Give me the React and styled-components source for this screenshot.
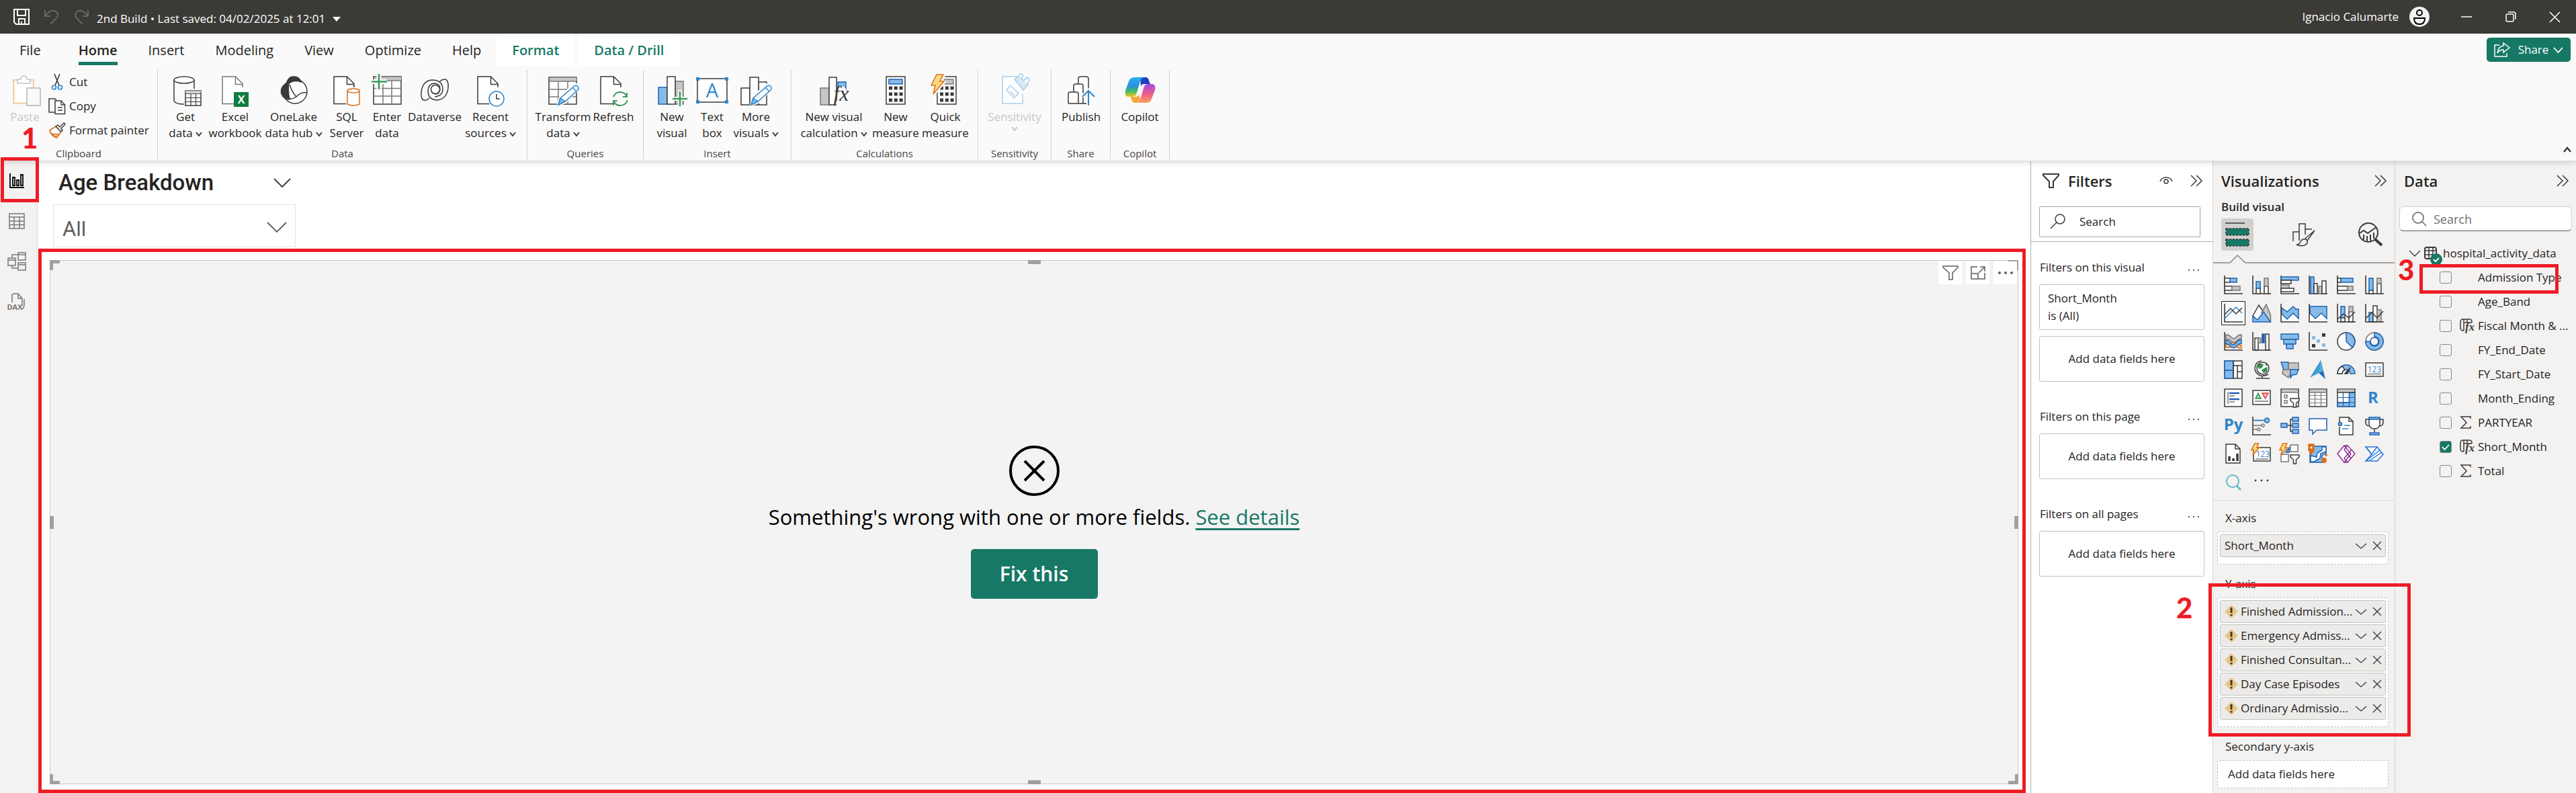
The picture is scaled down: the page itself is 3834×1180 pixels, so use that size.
import React from "react";
import styled, { createGlobalStyle, css } from "styled-components";

const K = "#3b3a39";
const BLUE = "#86bbe9";
const DEEP = "#1f62b0";
const SKY = "#2f86cb";
const GREY = "#797775";
const SILVER = "#c8c6c4";
const TEAL = "#177865";
const RED = "#ed1c24";
const ORANGE = "#d9701e";

const Global = createGlobalStyle`
  *, *::before, *::after { box-sizing: border-box; }
  body { margin: 0; background: #fff; color: #252423; font: 17px/24px "Open Sans", "Noto Sans", sans-serif; }
  button, input, select { font: inherit; color: inherit; }
  button { border: 0; background: none; padding: 0; cursor: pointer; }
  h2, h3, p, ul { margin: 0; padding: 0; font-size: inherit; font-weight: 400; }
  svg { display: block; flex: none; overflow: visible; }
`;

/* ---------- drawing helpers ---------- */
const Svg = ({ w = 28, h = w, vb, children, ...rest }) => (
  <svg width={w} height={h} viewBox={vb || `0 0 ${w} ${h}`} fill="none" stroke={K} strokeWidth="1.5" aria-hidden="true" {...rest}>
    {children}
  </svg>
);
const Box = ({ at, f = "#fff", s = K, ...rest }) => (
  <rect x={at[0]} y={at[1]} width={at[2]} height={at[3]} fill={f} stroke={s} {...rest} />
);
const Axis = () => <path d="M1 0V27H28" strokeWidth="1.6" />;
const Glyph = ({ x, y, size, fill = SKY, weight = 400, family = "Open Sans", ...rest }) => (
  <text x={x} y={y} fontSize={size} fontWeight={weight} fontFamily={`"${family}", sans-serif`} fill={fill} stroke="none" textAnchor="middle" {...rest}>{rest.children}</text>
);
const Bolt = ({ x = 0, y = 0, k = 1 }) => (
  <path transform={`translate(${x} ${y}) scale(${k})`} d="M8 0H18L13 10H19L3 29L6 16H0Z" fill="#fbd982" stroke={ORANGE} strokeWidth={1.5 / k} />
);
const DocPath = ({ s = K }) => (
  <g stroke={s}>
    <path d="M29 45H5V4H24L34 14V22" fill="#fff" stroke="none" />
    <path d="M26 44.500H5V4H24.500L35 14.500V20M24.500 4V15.500H35" />
  </g>
);
const ChevronDown = ({ w = 18, h = 9, c = K, sw = 1.3 }) => (
  <Svg w={w} h={h} stroke={c} strokeWidth={sw}><path d={`M1 1L${w / 2} ${h - 1}L${w - 1} 1`} /></Svg>
);
const DoubleChevron = () => <Svg w={18} h={18}><path d="M1 1L9 9L1 17M9 1L17 9L9 17" /></Svg>;
const Cross = ({ w = 12, c = K, sw = 1.4 }) => (
  <Svg w={w} h={w} stroke={c} strokeWidth={sw}><path d={`M0 0L${w} ${w}M${w} 0L0 ${w}`} /></Svg>
);
const Dots = ({ w = 18, c = K, r = 1.1 }) => (
  <Svg w={w} h={6} stroke="none" fill={c}><circle cx={2} cy={3} r={r} /><circle cx={w / 2} cy={3} r={r} /><circle cx={w - 2} cy={3} r={r} /></Svg>
);

/* ---------- ribbon icons, 48 x 48 ---------- */
const Pencil = () => (
  <g stroke={SKY}>
    <path d="M17 46L20 34L41 16Q47 15 47 22L27 42Z" fill="#fafafa" stroke="#fafafa" strokeWidth="4" />
    <path d="M20 36L41 18Q45 16 47 20Q48 22 46 24L27 41L17 46Z" fill="#fff" />
    <path d="M20 36L27 41L17 46Z" fill={BLUE} />
    <path d="M38 20L44 26" />
  </g>
);
const ribbonIcons = {
  paste: (
    <Svg w={48}>
      <rect x="7" y="9" width="30" height="35" fill="#fff" stroke="#f0d0b0" strokeWidth="2" />
      <rect x="9" y="11" width="26" height="31" stroke="#fdf3dc" strokeWidth="2" />
      <path d="M13 14V8H18Q18 3 22 3Q27 3 27 8H32V14Z" fill="#fff" stroke="#c4c4c4" />
      <rect x="27" y="21" width="20" height="26" fill="#fafafa" stroke="#b4b4b4" />
    </Svg>
  ),
  get: (
    <Svg w={48}>
      <path d="M7 9V40Q9 45 22 45M37 9V22" /><ellipse cx="22" cy="9" rx="15" ry="5" fill="#fff" />
      <Box at={[24, 25, 23, 22]} /><path d="M24 26.500H47" stroke={SILVER} strokeWidth="3" /><path d="M24 29.500H47M24 35.500H47M24 41.500H47M32 29V47M39.500 29V47" strokeWidth="1.200" />
    </Svg>
  ),
  excel: (
    <Svg w={48}>
      <DocPath s={GREY} />
      <rect x="22" y="27" width="22" height="22" fill="#107c41" stroke="none" />
      <Glyph x={33} y={44} size={16} weight={700} fill="#fff">X</Glyph>
    </Svg>
  ),
  onelake: (
    <Svg w={48}>
      <circle cx="26" cy="26" r="18" fill="#fff" />
      <path d="M14 13Q16 4 24 4Q33 4 35 12Q24 8 16 15Z" fill={K} />
      <path d="M17 12Q15 24 18 38Q10 38 6 30Q3 18 17 12Z" fill={K} />
      <path d="M18 16Q22 28 28 34M8 34Q20 40 28 34Q36 26 44 28" />
    </Svg>
  ),
  sql: (
    <Svg w={48}>
      <DocPath />
      <g stroke={ORANGE}><path d="M25 23V45Q34 50 43 45V23Z" fill="#fafafa" stroke="#fafafa" strokeWidth="4" /><path d="M25 25V45Q34 49 43 45V25" fill="#fff" /><ellipse cx="34" cy="25" rx="9" ry="3" fill="#fff" /></g>
    </Svg>
  ),
  enter: (
    <Svg w={48}>
      <Box at={[4, 4, 41, 41]} /><path d="M5 7H45" stroke={SILVER} strokeWidth="5" />
      <path d="M4 10H45M4 21.500H45M4 33H45M18 10V45M31 10V45" stroke={GREY} />
      <path d="M0 11.500H24M12 0V24" stroke="#fafafa" strokeWidth="7" /><path d="M1 11.500H24M12 0V23" stroke="#3a9a5b" strokeWidth="2.500" />
    </Svg>
  ),
  dataverse: (
    <Svg w={48}>
      <path d="M40 8Q45 10 44 21Q42 38 27 39Q14 38 14 25Q15 14 24 14Q32 15 32 23Q31 30 25 30Q19 29 19 23" />
      <path d="M8 39Q3 38 4 27Q6 10 20 9Q35 9 36 22Q36 33 24 34M16 36Q12 40 8 39M31 12Q34 8 40 8" />
      <circle cx="25" cy="23" r="6.500" fill="#fff" />
    </Svg>
  ),
  recent: (
    <Svg w={48}>
      <DocPath />
      <circle cx="33" cy="37" r="13" fill="#fafafa" stroke="none" /><circle cx="33" cy="37" r="11" fill="#fff" stroke={SKY} /><path d="M33 30V37H38" />
    </Svg>
  ),
  transform: (
    <Svg w={48}>
      <Box at={[3, 5, 41, 40]} /><path d="M4 8H44" stroke={SILVER} strokeWidth="5" /><path d="M3 11H44M3 23H44M3 34H44M17 11V45M31 11V45" stroke={GREY} />
      <Pencil />
    </Svg>
  ),
  refresh: (
    <Svg w={48}>
      <DocPath />
      <circle cx="34" cy="37" r="13" fill="#fafafa" stroke="none" />
      <path d="M24 34Q27 27 34 27Q41 27 44 34M44 28V34H38M45 39Q42 47 34 47Q27 47 24 40M24 47V40H30" stroke="#3a9a5b" strokeWidth="2" />
    </Svg>
  ),
  newvisual: (
    <Svg w={48}>
      <Box at={[4, 20, 13, 25]} f={BLUE} s={DEEP} /><Box at={[29, 11, 12, 34]} f={SILVER} s={GREY} /><Box at={[17, 4, 12, 41]} />
      <path d="M36 24V48M25 37H48" stroke="#fafafa" strokeWidth="6" /><path d="M36 26V48M25 37H47" stroke="#3a9a5b" strokeWidth="2.500" />
    </Svg>
  ),
  textbox: (
    <Svg w={48}>
      <Box at={[2, 7, 44, 35]} />
      <g fill={SKY} stroke="none"><rect x="0" y="5" width="5" height="5" /><rect x="43" y="5" width="5" height="5" /><rect x="0" y="39" width="5" height="5" /><rect x="43" y="39" width="5" height="5" /></g>
      <Glyph x={24} y={35} size={29}>A</Glyph>
    </Svg>
  ),
  more: (
    <Svg w={48}>
      <Box at={[2, 21, 13, 25]} /><Box at={[28, 12, 12, 34]} /><Box at={[15, 5, 13, 41]} /><Pencil />
    </Svg>
  ),
  calc: (
    <Svg w={48}>
      <Box at={[4, 21, 13, 25]} f={SILVER} s={GREY} /><Box at={[30, 12, 12, 12]} f={BLUE} s={DEEP} /><path d="M30 46V22Q33 14 42 22V46Z" fill="#fafafa" stroke="none" /><path d="M28 46H17V5H28V40" fill="#fff" />
      <Glyph x={35} y={40} size={32} family="Liberation Serif" fill={K} fontStyle="italic">fx</Glyph>
    </Svg>
  ),
  measure: (
    <Svg w={48}>
      <Box at={[10, 4, 28, 41]} /><Box at={[14, 8, 20, 7]} f={BLUE} s={DEEP} />
      <path d="M14 21H36M14 30H36M14 39H36" strokeWidth="5" strokeDasharray="5 2.800" />
    </Svg>
  ),
  quick: (
    <Svg w={48}>
      <Box at={[12, 4, 28, 41]} /><Box at={[18, 8, 18, 7]} f={SILVER} s={GREY} />
      <path d="M16 21H38M16 30H38M16 39H38" strokeWidth="5" strokeDasharray="5 2.800" />
      <path d="M10 0H24L19 12H24L8 31H4Z" fill="#fafafa" stroke="#fafafa" strokeWidth="2" /><Bolt x={3} y={1} k={1} />
    </Svg>
  ),
  sensitivity: (
    <Svg w={48} stroke="#a9cfe8">
      <path d="M36 30V44H6V4H30" fill="#fff" />
      <path d="M24 8L30 3L44 16L37 24Z" fill="#d5e8f5" /><path d="M30 2Q34 -2 37 2L33 8M38 10L42 5Q48 8 45 12L41 16" fill="#fafafa" />
      <path d="M12 24L18 17L30 29L23 36Z" fill="#fafafa" /><path d="M18 26L24 32" />
    </Svg>
  ),
  publish: (
    <Svg w={48}>
      <path d="M20 15V7Q20 4 23 4H31Q35 4 35 7V24M13 27V18Q13 15 16 15H24Q27 15 27 18V44M5 44V30Q5 27 8 27H17Q20 27 20 30V44M5 44H34" fill="#fff" />
      <path d="M35 47V25M26 34L35 25L44 34" stroke="#fafafa" strokeWidth="6" /><path d="M35 47V25M26 34L35 25L44 34" stroke={SKY} strokeWidth="2" />
    </Svg>
  ),
  copilot: (
    <Svg w={48} stroke="none">
      <defs>
        <linearGradient id="copA" x1="0" y1="0" x2="0" y2="1"><stop offset="0" stopColor="#2ab0ee" /><stop offset=".45" stopColor="#2a8fe0" /><stop offset=".7" stopColor="#3fb86b" /><stop offset="1" stopColor="#f3c91b" /></linearGradient>
        <linearGradient id="copB" x1="0" y1="0" x2="0" y2="1"><stop offset="0" stopColor="#a44ae8" /><stop offset=".5" stopColor="#ec5a8c" /><stop offset="1" stopColor="#fba05a" /></linearGradient>
        <linearGradient id="copC" x1="0" y1="0" x2="1" y2="1"><stop offset="0" stopColor="#1b4fc0" /><stop offset="1" stopColor="#2a2fbb" /></linearGradient>
      </defs>
      <path d="M24 5H32Q36 5 37 10L39 15H30Q26 15 25 19Z" fill="url(#copC)" />
      <path d="M16 5H28Q25 7 24 11L18 31Q16 34 12 34H7Q0 34 2 25L7 11Q9 5 16 5Z" fill="url(#copA)" />
      <path d="M36 15H41Q48 15 46 24L41 37Q39 43 33 43H20Q23 41 24 38L30 18Q32 15 36 15Z" fill="url(#copB)" />
      <path d="M10 34H17Q21 34 22 30L24 38Q22 43 18 43H16Q12 43 11 38Z" fill="#f2a93b" />
    </Svg>
  ),
  cut: (
    <Svg w={24}>
      <path d="M8 0L15 17M16 0L9 17" strokeWidth="1.600" /><circle cx="7.500" cy="20" r="3" stroke={SKY} strokeWidth="1.700" /><circle cx="16.500" cy="20" r="3" stroke={SKY} strokeWidth="1.700" />
    </Svg>
  ),
  copy: (
    <Svg w={24}>
      <path d="M9 21H0V1H9L11 3" /><path d="M9 4H18L23.500 10V23.500H9Z" fill="#fff" /><path d="M18 4V10H23.500M13 14H20M13 18H20" strokeWidth="1.300" />
    </Svg>
  ),
  painter: (
    <Svg w={24}>
      <path d="M1 12L10 6L18 14L11 23Q3 20 1 12Z" fill="#fff" stroke={ORANGE} strokeWidth="1.700" /><path d="M4 17L15 18L11 23Z" fill="#fbd08a" stroke={ORANGE} />
      <path d="M10 6L13 4L16 7L22 1Q25 2 23 4L18 9L20 12L18 14Z" fill="#fff" />
    </Svg>
  ),
};

/* ---------- visual gallery icons, 28 x 28 ---------- */
const Grid3 = () => <path d="M1 10.500H27M1 16H27M1 21.500H27M9.500 6V27M18.500 6V27" stroke={GREY} strokeWidth="1.200" />;
const FunnelBadge = () => <path d="M15 15H28V18L23.500 22V28H19.500V22L15 18Z" fill="#fff" />;
const gallery = [
  ["Stacked bar chart", <><Axis /><Box at={[1, 4, 8, 6]} /><Box at={[9, 4, 10, 6]} f={BLUE} s={DEEP} /><Box at={[1, 16, 11, 6]} /><Box at={[12, 16, 12, 6]} f={SILVER} s={GREY} /></>],
  ["Stacked column chart", <><Axis /><Box at={[6, 19, 6, 8]} /><Box at={[6, 9, 6, 10]} f={BLUE} s={DEEP} /><Box at={[18, 16, 6, 11]} /><Box at={[18, 4, 6, 12]} f={SILVER} s={GREY} /></>],
  ["Clustered bar chart", <><Axis /><Box at={[1, 2, 26, 5]} f={BLUE} s={DEEP} /><Box at={[1, 7, 15, 5]} /><Box at={[1, 14, 12, 5]} f={SILVER} s={GREY} /><Box at={[1, 19, 19, 5]} /></>],
  ["Clustered column chart", <><Axis /><Box at={[3, 2, 5, 25]} f={BLUE} s={DEEP} /><Box at={[8, 12, 5, 15]} /><Box at={[15, 16, 5, 11]} f={SILVER} s={GREY} /><Box at={[20, 8, 6, 19]} /></>],
  ["100% stacked bar chart", <><Axis /><Box at={[1, 4, 5, 6]} /><Box at={[6, 4, 18, 6]} f={BLUE} s={DEEP} /><Box at={[1, 16, 15, 6]} /><Box at={[16, 16, 8, 6]} f={SILVER} s={GREY} /></>],
  ["100% stacked column chart", <><Axis /><Box at={[6, 22, 6, 5]} /><Box at={[6, 4, 6, 18]} f={BLUE} s={DEEP} /><Box at={[18, 12, 6, 15]} /><Box at={[18, 4, 6, 8]} f={SILVER} s={GREY} /></>],
  ["Line chart", <><Axis /><path d="M1 22L18 5L27 14" stroke={SKY} /><path d="M1 16L10 7L18 15L27 6" /></>],
  ["Area chart", <><path d="M1 18L10 2L18 14L8 25Z" fill="#fff" /><path d="M14 13L21 1L27.500 17V27Z" fill={SILVER} stroke={GREY} /><path d="M1 27V19L8 24L17 12L27 27Z" fill={BLUE} stroke={DEEP} /></>],
  ["Stacked area chart", <><path d="M2 15L10 23L19 15L27 22V27H2Z" fill="#fff" stroke="none" /><path d="M2 6L10 12L19 4L23 8H27V22L19 14L10 23L2 15Z" fill={BLUE} stroke={DEEP} /><Axis /></>],
  ["100% stacked area chart", <><path d="M2 15L10 23L19 15L27 22V27H2Z" fill="#fff" stroke="none" /><path d="M2 4H27V22L19 14L10 22L2 14Z" fill={BLUE} stroke={DEEP} /><Axis /></>],
  ["Line and stacked column chart", <><Box at={[6, 4, 6, 17]} f={BLUE} s={DEEP} /><Box at={[6, 21, 6, 6]} /><Box at={[18, 12, 6, 15]} /><Box at={[18, 4, 6, 8]} f={SILVER} s={GREY} /><Axis /><path d="M1 23L10 15L18 21L27 12" /></>],
  ["Line and clustered column chart", <><Box at={[6, 13, 6, 14]} f={BLUE} s={DEEP} /><Box at={[12, 3, 6, 24]} /><Box at={[18, 9, 6, 18]} f={SILVER} s={GREY} /><Axis /><path d="M1 22L10 13L18 21L27 11" /></>],
  ["Ribbon chart", <><path d="M3 4Q8 4 11 8Q15 12 19 7Q22 4 26 4V10Q22 10 19 14Q15 17 11 14Q8 10 3 11Z" fill={SILVER} stroke={GREY} /><path d="M3 17Q14 14 26 20V24H22Q14 18 8 23H3Z" fill="#f8c38c" stroke={ORANGE} /><path d="M3 12Q7 12 10 17Q14 22 18 16Q22 11 26 12V17Q22 17 19 21Q14 26 9 21Q7 17 3 18Z" fill={BLUE} stroke={DEEP} /><Axis /></>],
  ["Waterfall chart", <><Box at={[4, 9, 5, 18]} /><Box at={[9, 9, 4, 7]} f={SILVER} s={GREY} /><Box at={[15, 3, 3, 13]} f={DEEP} s={DEEP} /><Box at={[20, 3, 5, 24]} /><Axis /></>],
  ["Funnel", <><Box at={[1, 3, 26, 8]} f={BLUE} s={DEEP} /><Box at={[5, 11, 18, 7]} f={BLUE} s={DEEP} /><Box at={[9, 18, 10, 7]} f={BLUE} s={DEEP} /></>],
  ["Scatter chart", <><Axis /><g stroke="none"><rect x="5" y="6" width="5" height="5" fill={BLUE} /><rect x="12" y="11" width="5" height="5" fill={BLUE} /><rect x="20" y="17" width="5" height="5" fill={BLUE} /><rect x="20" y="2" width="5" height="5" fill={K} /><rect x="5" y="18" width="5" height="5" fill={K} /></g></>],
  ["Pie chart", <><circle cx="14" cy="14" r="13" fill="#fff" /><path d="M14 1A13 13 0 0 1 23 23L14 14Z" fill={BLUE} stroke={DEEP} /></>],
  ["Donut chart", <><circle cx="14" cy="14" r="13" fill="#fff" stroke={GREY} /><path d="M14 1A13 13 0 1 1 1 14H7A7 7 0 1 0 14 7Z" fill={BLUE} stroke={DEEP} /><circle cx="14" cy="14" r="6" fill="#f3f2f1" stroke={DEEP} /></>],
  ["Treemap", <><Box at={[1, 1, 26, 26]} /><Box at={[1, 1, 13, 14]} f={BLUE} s={DEEP} /><Box at={[1, 15, 13, 12]} f={BLUE} s={DEEP} /><path d="M14 8H27M20 8V27M20 17H27M14 1V27" /></>],
  ["Map", <><circle cx="16" cy="12" r="9" fill="#fff" /><path d="M11 5L17 6L15 11L10 13L8 9ZM18 12L23 10L22 17L17 19L14 15ZM20 4L24 8L20 8Z" fill="#2f8f4e" stroke="none" /><path d="M14 1Q5 2 4 12Q4 19 12 23Q19 24 24 21M15 23V26M6 27H26" /></>],
  ["Filled map", <><path d="M1 3H12V15L5 14Z" fill={BLUE} stroke={DEEP} /><path d="M12 4H27V14L12 15Z" fill={SILVER} stroke={GREY} /><path d="M4 14L15 14V20L12 26L3 20Z" fill={SILVER} stroke={GREY} /><path d="M15 14H27L24 21L18 22L15 26Z" fill={BLUE} stroke={DEEP} /></>],
  ["Azure map", <g stroke="none"><path d="M18 0L2 26L15 19Z" fill="#3d9dd0" /><path d="M18 0L15 19L25 28Z" fill="#2a6fb8" /><path d="M18 0L15 19L22 16Z" fill="#52b0dd" /></g>],
  ["Gauge", <><path d="M1 20A13 13 0 0 1 27 20H20A6 6 0 0 0 8 20Z" fill={BLUE} stroke={DEEP} /><path d="M1 20A13 13 0 0 1 8 9L12 14Q8 16 8 20Z" fill="#fff" /><path d="M20 11L16 20H12Z" fill={K} /></>],
  ["Card", <><Box at={[1, 4, 26, 20]} /><Glyph x={14} y={18} size={12}>123</Glyph><path d="M4 20.500H24" stroke={GREY} /></>],
  ["Multi-row card", <><Box at={[1, 1, 26, 26]} /><path d="M6 5V23" stroke={GREY} /><path d="M8 7H23M8 16H23" stroke={DEEP} strokeWidth="2.500" /><path d="M8 11H16M8 20H16" stroke={GREY} /></>],
  ["KPI", <><Box at={[1, 3, 26, 21]} /><path d="M5 15L9 7L13 15Z" fill="#9fd8ae" stroke="#2f8f4e" /><path d="M15 7H24L19.500 15Z" fill="#fbb" stroke="#d93a3a" /><path d="M4 19H24" stroke={GREY} /></>],
  ["Slicer", <><Box at={[1, 1, 26, 26]} /><path d="M2 3.500H26" stroke={SILVER} strokeWidth="4" /><path d="M1 6H27" stroke={GREY} /><Box at={[6, 10, 4, 4]} s={GREY} /><Box at={[6, 18, 4, 4]} s={GREY} /><FunnelBadge /></>],
  ["Table", <><Box at={[1, 1, 26, 26]} /><path d="M2 3.500H26" stroke={SILVER} strokeWidth="4" /><path d="M1 6H27" stroke={GREY} /><Grid3 /></>],
  ["Matrix", <><Box at={[1, 1, 26, 26]} /><path d="M2 3.500H26" stroke={SILVER} strokeWidth="4" /><path d="M18.500 6H27V27H1V21H18.500Z" fill={BLUE} stroke={DEEP} /><path d="M1 6H27" /><path d="M1 13.500H27M1 21H27M9.500 6V27M18.500 6V27" stroke={DEEP} strokeWidth="1.200" /></>],
  ["R script visual", <Glyph x={12} y={22} size={24} weight={700}>R</Glyph>],
  ["Python visual", <Glyph x={14} y={20} size={24} weight={700}>Py</Glyph>],
  ["Key influencers", <><Axis /><path d="M2 5.500H18" stroke={SKY} strokeWidth="2" /><circle cx="22" cy="5.500" r="3.500" fill={BLUE} stroke={DEEP} /><path d="M2 13H14M2 19H8" stroke={GREY} /><circle cx="16" cy="13" r="2" fill="#fff" stroke={GREY} /><circle cx="10" cy="19" r="2" fill="#fff" stroke={GREY} /></>],
  ["Decomposition tree", <><path d="M10 13H17M18 4H15V22H18" /><Box at={[1, 10, 9, 6]} f={BLUE} s={DEEP} /><Box at={[18, 1, 9, 6]} f={BLUE} s={DEEP} /><Box at={[18, 10, 9, 6]} f={BLUE} s={DEEP} /><Box at={[18, 19, 9, 6]} f={BLUE} s={DEEP} /></>],
  ["Q&A", <path d="M1 3H27V20H12L6 26V20H1Z" fill="#fff" stroke={DEEP} />],
  ["Smart narrative", <><path d="M4 8V1H18L24 7V27H4V15" fill="#fff" /><path d="M18 1V7H24" /><circle cx="5" cy="11" r="2.500" fill={BLUE} stroke={DEEP} /><path d="M11 13H20M8 18H17" stroke={SKY} /></>],
  ["Goals", <><path d="M6 4H1V8Q1 14 7 14M22 4H27V8Q27 14 21 14" /><path d="M6 2H22V11Q21 18 14 18Q7 18 6 11ZM14 18V23" fill="#fff" /><Box at={[6, 1, 16, 3]} f={BLUE} s={DEEP} /><Box at={[7, 24, 14, 3]} f={BLUE} s={DEEP} /></>],
  ["Paginated report", <><path d="M3 -1H17L24 6V27H3Z" fill="#fff" /><path d="M17 -1V6H24" /><path d="M8 17V24M14 20V24M20 13V24" strokeWidth="3.500" /></>],
  ["Card (new)", <><Box at={[2, 4, 25, 20]} /><Glyph x={16} y={18} size={12}>123</Glyph><path d="M5 21H24" stroke={GREY} /><Bolt x={-1} y={-2} k={0.6} /></>],
  ["Slicer (new)", <><Box at={[15, 0, 11, 10]} s={GREY} /><Box at={[1, 14, 11, 11]} s={GREY} /><path d="M8 11L13 4V11Z" fill={BLUE} stroke={DEEP} /><FunnelBadge /><Bolt x={-1} y={-2} k={0.6} /></>],
  ["ArcGIS map", <><path d="M2 2H26V12L20 16L21 26H2Z" fill={BLUE} stroke={DEEP} /><path d="M3 16L12 18L13 12L20 8V3H26V10L18 13L17 20L8 25H3Z" fill="#fff" stroke={DEEP} /><path d="M0 -1H8V8L4 14L0 8Z" fill={ORANGE} stroke={ORANGE} /><circle cx="4" cy="4" r="1.500" fill="#fff" stroke="none" /><circle cx="23" cy="23" r="4" fill={ORANGE} stroke="none" /><circle cx="26" cy="15" r="2" fill={ORANGE} stroke="none" /></>],
  ["Power Apps", <g stroke="#8e2a91"><path d="M11 1L1 13L11 26H16L27 13L16 1Z" fill="#fff" /><path d="M11 1L21 13.500L11 26M16 1L11 7L21 20M22 7L11 20L16 26" /></g>],
  ["Power Automate", <g stroke="#2672d6"><path d="M1 3H18L27 14L18 24H1L10 14Z" fill="#fff" /><path d="M10 14L18 3M1 24L22 8M6 24L25 11M1 3L10 14" /></g>],
  ["Find visual", <><circle cx="13" cy="12" r="9" stroke="#66b8cc" strokeWidth="2" /><path d="M19 19L25 25" stroke="#66b8cc" strokeWidth="3" /></>],
  ["More visuals", <g fill={K} stroke="none"><circle cx="5" cy="11" r="1.400" /><circle cx="14" cy="11" r="1.400" /><circle cx="23" cy="11" r="1.400" /></g>],
];

/* ---------- layout ---------- */
const Page = styled.div`display: flex; flex-direction: column; min-height: 100vh; overflow: hidden;`;
const Row = styled.div`display: flex; align-items: center; gap: ${(p) => p.$gap || 0}px;`;
const Spacer = styled.div`flex: 1;`;

const TitleBar = styled.header`
  display: flex; align-items: center; height: 50px; padding: 0 24px 0 20px;
  background: #3b3a37; color: #fff;
`;
const BarTools = styled(Row)`gap: 22px; margin-right: 12px;`;
const FileName = styled.button`display: flex; align-items: center; gap: 11px; padding-top: 6px;`;
const Avatar = styled.span`
  display: grid; place-items: center; width: 30px; height: 30px; margin: 0 47px 0 16px;
  border-radius: 50%; background: #f3f2f1;
`;
const WindowButtons = styled(Row)`gap: 50px;`;

const Ribbon = styled.section`
  position: relative; z-index: 1; background: #fafafa; border-bottom: 1px solid #dedede; box-shadow: 0 2px 8px rgba(0,0,0,.14);
`;
const TabRow = styled.nav`display: flex; height: 48px; padding-left: 6px;`;
const Tab = styled.button`
  display: flex; flex-direction: column; align-items: center; justify-content: flex-end;
  padding: 0 23px 1px; font-size: 20px; color: #252423;
  ${(p) => p.$first && css`margin-right: 10px;`}
  ${(p) => p.$context && css`background: #fff; color: ${TEAL}; font-weight: 600; margin-right: 6px;`}
  ${(p) => p.$active && css`font-weight: 600;`}
  &::after { content: ""; width: 100%; height: 5px; margin-top: 5px; background: ${(p) => (p.$active ? TEAL : "transparent")}; }
`;
const ShareButton = styled.button`
  display: flex; align-items: center; justify-content: center; gap: 7px; width: 125px; height: 36px; margin: 6px 8px 0 0;
  border-radius: 5px; background: ${TEAL}; color: #fff;
  svg:first-child { margin-right: 5px; }
`;
const Groups = styled.div`display: flex; padding: 6px 0 2px;`;
const Group = styled.section`
  display: flex; flex-direction: column; justify-content: space-between; width: ${(p) => p.$w}px; height: 133px;
  border-right: 1px solid #d0d0d0;
`;
const GroupBody = styled.div`display: flex; padding-left: 10px;`;
const GroupName = styled.h3`font-size: 15px; line-height: 18px; text-align: center; color: #484644;`;
const BigButton = styled.button`
  display: flex; flex-direction: column; align-items: center; width: ${(p) => p.$w}px; padding-top: 6px; white-space: nowrap;
  line-height: 24px; color: ${(p) => (p.$off ? "#c8c6c4" : "#252423")};
  svg { margin-bottom: 4px; }
`;
const SecondLine = styled.span`display: flex; align-items: center; gap: 4px; svg { margin: 2px 0 0; }`;
const SmallButtons = styled.div`display: flex; flex-direction: column; margin-left: 9px;`;
const SmallButton = styled.button`display: flex; align-items: center; gap: 6px; height: 36px; white-space: nowrap;`;
const Collapse = styled.button`align-self: flex-end; margin: 0 7px 10px 0;`;

const Body = styled.main`display: flex; flex: 1; align-items: stretch;`;
const Rail = styled.nav`
  display: flex; flex-direction: column; width: 56px; background: #f3f2f1; border-right: 1px solid #dcdad8;
`;
const RailButton = styled.button`display: grid; place-items: center; height: 60px; padding: 0 6px 2px 0;`;

/* red call-out frames drawn over the parts they point at */
const Callout = styled.span`
  position: absolute; z-index: 3; border: 5px solid ${RED}; pointer-events: none;
  inset: ${(p) => p.$inset}; width: ${(p) => (p.$w ? `${p.$w}px` : "auto")};
`;
const CalloutNumber = styled.span`
  position: absolute; z-index: 3; color: ${RED}; font: 900 42px/42px Lato, sans-serif; pointer-events: none;
  left: ${(p) => p.$left}px; top: ${(p) => p.$top}px;
`;

const Canvas = styled.section`display: flex; flex: 1; flex-direction: column; min-width: 0; background: #fff;`;
const Slicer = styled.div`width: 361px; margin: 12px 0 0 23px; font-family: Roboto, sans-serif;`;
const SlicerHead = styled.div`
  display: flex; justify-content: space-between; align-items: center; height: 52px; padding: 0 7px 12px 8px;
  font-size: 33px; font-weight: 500;
`;
const SelectWrap = styled.div`display: grid; align-items: center; border: 1px solid #e1e1e1; height: 64px;
  > * { grid-area: 1 / 1; } > svg { justify-self: end; margin: 4px 12px 0 0; pointer-events: none; }
`;
const Select = styled.select`
  appearance: none; width: 100%; height: 62px; border: 0; background: #fff; padding: 10px 0 0 13px; font-size: 31px; color: #605e5c;
`;
const VisualFrame = styled.div`position: relative; display: flex; flex: 1; margin: 2px 7px 0 1px; padding: 17px 11px 13px 17px;`;
const Visual = styled.article`
  position: relative; display: flex; flex: 1; flex-direction: column; align-items: center; justify-content: center;
  border: 1px solid #c8c8c8; background: #f3f3f3; color: #000;
`;
const VisualTools = styled.div`position: absolute; top: 1px; right: 1px; display: flex; gap: 6px;`;
const VisualTool = styled.button`display: grid; place-items: center; width: 35px; height: 34px; background: #fff;`;
const Handle = styled.span`
  position: absolute; ${(p) => p.$at}
  ${(p) => (p.$corner ? css`width: 15px; height: 15px; border: 0 solid #a0a0a0; border-width: ${p.$corner};` : css`background: #a0a0a0;`)}
`;
const ErrorText = styled.p`margin: 11px 0 28px; font-size: 31px; line-height: 40px; a { color: ${TEAL}; text-underline-offset: 5px; }`;
const FixButton = styled.button`
  width: 189px; height: 74px; border-radius: 5px; background: ${TEAL}; color: #fff; font-size: 30px; font-weight: 600;
`;

const Pane = styled.aside`
  display: flex; flex-direction: column; width: ${(p) => p.$w}px; border-left: 1px solid ${(p) => (p.$plain ? "#b0b0b0" : "#d8d6d4")};
  background: ${(p) => (p.$plain ? "#fff" : "#f3f2f1")};
`;
const PaneHead = styled.div`display: flex; align-items: center; height: 56px; padding: 2px ${(p) => p.$right}px 0 ${(p) => p.$left}px;`;
const PaneTitle = styled.h2`font-size: 22px; font-weight: 600; line-height: 30px;`;
const FilterTop = styled.div`padding: 11px 18px 6px 12px; border-bottom: 1px solid #b0b0b0;`;
const SearchBox = styled.label`
  display: flex; align-items: center; gap: ${(p) => p.$gap}px; height: ${(p) => p.$h}px; padding: 0 ${(p) => p.$pad}px; background: #fff;
  border: 1px solid ${(p) => (p.$soft ? "#d2d0ce" : "#a8a6a4")}; border-radius: ${(p) => (p.$soft ? 6 : 2)}px;
  ${(p) => p.$soft && css`margin: 11px 6px 0; border-bottom-color: #605e5c;`}
  input { flex: 1; min-width: 0; border: 0; outline: 0; padding: 0; background: none; font-size: ${(p) => (p.$soft ? 18 : 17)}px; }
  input::placeholder { color: ${(p) => (p.$soft ? "#707070" : "#252423")}; opacity: 1; }
`;
const FilterGroup = styled.section`display: flex; flex-direction: column; gap: 9px; padding: 22px 12px 31px; & + & { padding-top: 5px; }`;
const FilterName = styled.div`
  display: flex; justify-content: space-between; align-items: center; height: 32px; padding: 0 7px 0 1px;
  svg { margin-top: 8px; }
`;
const Card = styled.div`
  height: 68px; border: 1px solid #c4c2c0; border-radius: 3px; background: #fff;
  ${(p) => p.$empty ? css`display: grid; place-items: center;` : css`padding: 7px 12px; line-height: 26px;`}
`;

const BuildTitle = styled.h3`padding: 0 12px; font-weight: 600; height: 29px; line-height: 24px;`;
const BuildTabs = styled.div`display: flex; justify-content: space-between; padding: 0 12px 7px;`;
const BuildTab = styled.button`
  display: grid; place-items: center; width: 48px; height: 48px; border-radius: 4px; background: ${(p) => (p.$on ? "#d2d0ce" : "none")};
`;
const Gallery = styled.div`
  display: grid; grid-template-columns: repeat(6, 36px); gap: 6px; padding: 14px 12px 8px; border-bottom: 1px solid #dcdad8;
`;
const GalleryButton = styled.button`
  display: grid; place-items: center; height: 36px; border: 1px solid ${(p) => (p.$on ? "#252423" : "transparent")};
  background: ${(p) => (p.$on ? "#fafafa" : "none")};
`;
const WellName = styled.h3`height: 46px; line-height: 24px; padding: 14px 0 0 18px;`;
const Well = styled.div`
  position: relative; display: flex; flex-direction: column; gap: 2px; margin: 0 9px 3px 6px; padding: 3px 3px 10px;
  border: 1px dashed #c4c2c0; border-radius: 3px; background: #fff;
`;
const EmptyWell = styled(Well)`height: 42px; padding: 8px 15px; line-height: 24px;`;
const Chip = styled.div`
  display: flex; align-items: center; gap: 4px; height: 34px; padding: 0 6px;
  border: 1px solid #c4c2c0; border-radius: 3px; background: #edebe9;
  > span { flex: 1; white-space: nowrap; min-width: 0; }
  button + button { margin-left: 5px; }
`;

const Tree = styled.ul`display: flex; flex-direction: column; list-style: none; padding-top: 15px;`;
const TreeRow = styled.li`
  position: relative; display: flex; align-items: center; height: 36px; white-space: nowrap;
  padding-left: ${(p) => (p.$root ? 20 : 66)}px;
`;
const RootButton = styled.button`display: flex; align-items: center; gap: 4px; svg:first-child { margin-right: 1px; }`;
const CheckLabel = styled.label`display: flex; align-items: center;`;
const CheckCell = styled.span`
  display: grid; place-items: center; > * { grid-area: 1 / 1; } svg { visibility: hidden; pointer-events: none; }
  input:checked + svg { visibility: visible; }
`;
const CheckInput = styled.input`
  appearance: none; width: 18px; height: 18px; margin: 0; border: 1px solid #8a8886; border-radius: 3px;
  &:checked { background: ${TEAL}; }
`;
const FieldIcon = styled.span`width: 39px; padding-left: 12px;`;

/* ---------- parts ---------- */
const Big = ({ icon, w, l1, l2, caret, off }) => (
  <BigButton $w={w} $off={off} disabled={off} type="button">
    {ribbonIcons[icon]}
    <span>{l1}</span>
    {(l2 || caret) && <SecondLine>{l2}{caret && <ChevronDown w={10} h={7} sw={2} c={off ? "#c8c6c4" : K} />}</SecondLine>}
  </BigButton>
);

const groups = [
  { name: "Data", w: 550, items: [
    { icon: "get", w: 62, l1: "Get", l2: "data", caret: true },
    { icon: "excel", w: 86, l1: "Excel", l2: "workbook" },
    { icon: "onelake", w: 88, l1: "OneLake", l2: "data hub", caret: true },
    { icon: "sql", w: 70, l1: "SQL", l2: "Server" },
    { icon: "enter", w: 50, l1: "Enter", l2: "data" },
    { icon: "dataverse", w: 92, l1: "Dataverse" },
    { icon: "recent", w: 74, l1: "Recent", l2: "sources", caret: true },
  ] },
  { name: "Queries", w: 173, items: [
    { icon: "transform", w: 86, l1: "Transform", l2: "data", caret: true },
    { icon: "refresh", w: 64, l1: "Refresh" },
  ] },
  { name: "Insert", w: 220, items: [
    { icon: "newvisual", w: 64, l1: "New", l2: "visual" },
    { icon: "textbox", w: 56, l1: "Text", l2: "box" },
    { icon: "more", w: 74, l1: "More", l2: "visuals", caret: true },
  ] },
  { name: "Calculations", w: 278, items: [
    { icon: "calc", w: 106, l1: "New visual", l2: "calculation", caret: true },
    { icon: "measure", w: 78, l1: "New", l2: "measure" },
    { icon: "quick", w: 70, l1: "Quick", l2: "measure" },
  ] },
  { name: "Sensitivity", w: 109, items: [{ icon: "sensitivity", w: 88, l1: "Sensitivity", caret: true, off: true }] },
  { name: "Share", w: 88, items: [{ icon: "publish", w: 68, l1: "Publish" }] },
  { name: "Copilot", w: 88, items: [{ icon: "copilot", w: 67, l1: "Copilot" }] },
];

const tabs = ["File", "Home", "Insert", "Modeling", "View", "Optimize", "Help", "Format", "Data / Drill"];

const FxIcon = () => (
  <Svg w={22}>
    <path d="M6 18Q1 18 1 14V5Q1 1 5 1H14Q18 1 18 5V6M6 1V18M6 6H18M11 1V6" />
    <Glyph x={15} y={18} size={17} family="Liberation Serif" weight={700} fill={K} fontStyle="italic">fx</Glyph>
  </Svg>
);
const SigmaIcon = () => <Svg w={18} h={20}><path d="M16 4V1H2L10 10L2 18H16V15" /></Svg>;
const fieldIcons = { fx: <FxIcon />, sum: <SigmaIcon /> };
const fields = [
  { name: "Admission Type", marked: true }, { name: "Age_Band" }, { name: "Fiscal Month & ...", icon: "fx" }, { name: "FY_End_Date" },
  { name: "FY_Start_Date" }, { name: "Month_Ending" }, { name: "PARTYEAR", icon: "sum" },
  { name: "Short_Month", icon: "fx", on: true }, { name: "Total", icon: "sum" },
];
const yFields = ["Finished Admission...", "Emergency Admiss...", "Finished Consultan...", "Day Case Episodes", "Ordinary Admissio..."];

const FieldChip = ({ name, warn }) => (
  <Chip>
    {warn && <Svg w={20}><path d="M10 0L20 10L10 20L0 10Z" fill="#eac782" stroke="none" /><path d="M10 4V12M10 14V16.500" strokeWidth="3" /></Svg>}
    <span>{name}</span>
    <button type="button" aria-label={`Options for ${name}`}><ChevronDown /></button>
    <button type="button" aria-label={`Remove ${name}`}><Cross /></button>
  </Chip>
);
const FilterSection = ({ title, children }) => (
  <FilterGroup>
    <FilterName>{title}<button type="button" aria-label="More options"><Dots /></button></FilterName>
    {children}
    <Card $empty>Add data fields here</Card>
  </FilterGroup>
);

export default function App() {
  return (
    <Page>
      <Global />
      <TitleBar>
        <BarTools>
          <Svg w={24} stroke="#fff" strokeWidth="2"><path d="M1 1H23V23H4L1 20ZM6 1V10H18V1M8 23V15H17V23M12 19V23" /></Svg>
          <Svg w={22} stroke="#75736f"><path d="M1 1V10H9M1 10Q8 0 15 2Q22 5 19 12L9 22" /></Svg>
          <Svg w={22} stroke="#75736f"><path d="M21 1V10H13M21 10Q14 0 7 2Q0 5 3 12L13 22" /></Svg>
        </BarTools>
        <FileName type="button">2nd Build • Last saved: 04/02/2025 at 12:01<Svg w={12} h={7} fill="#fff" stroke="none"><path d="M0 0H12L6 7Z" /></Svg></FileName>
        <Spacer />
        <span>Ignacio Calumarte</span>
        <Avatar><Svg w={20} h={24} stroke="#000" strokeWidth="2"><circle cx="10" cy="6" r="4" /><path d="M2 14H18Q18 23 10 23Q2 23 2 14Z" /></Svg></Avatar>
        <WindowButtons>
          <button type="button" aria-label="Minimise"><Svg w={16} stroke="#fff"><path d="M0 8H16" /></Svg></button>
          <button type="button" aria-label="Restore"><Svg w={16} stroke="#fff"><rect x="1" y="4" width="11" height="11" rx="2" /><path d="M4 1H12Q15 1 15 4V12" /></Svg></button>
          <button type="button" aria-label="Close"><Cross w={15} c="#fff" sw={1.5} /></button>
        </WindowButtons>
      </TitleBar>

      <Ribbon>
        <TabRow>
          {tabs.map((t, i) => <Tab key={t} type="button" $first={i === 0} $active={i === 1} $context={i > 6}>{t}</Tab>)}
          <Spacer />
          <ShareButton type="button">
            <Svg w={24} h={22} stroke="#fff"><path d="M8 4H1V21H19V16" /><path d="M14 1L23 8L14 15V11Q8 11 5 16Q6 6 14 5Z" /></Svg>
            Share<ChevronDown w={15} h={9} c="#fff" sw={1.8} />
          </ShareButton>
        </TabRow>
        <Groups>
          <Group $w={235}>
            <GroupBody>
              <Big icon="paste" w={54} l1="Paste" off />
              <SmallButtons>
                <SmallButton type="button">{ribbonIcons.cut}Cut</SmallButton>
                <SmallButton type="button">{ribbonIcons.copy}Copy</SmallButton>
                <SmallButton type="button">{ribbonIcons.painter}Format painter</SmallButton>
              </SmallButtons>
            </GroupBody>
            <GroupName>Clipboard</GroupName>
          </Group>
          {groups.map((g) => (
            <Group key={g.name} $w={g.w}>
              <GroupBody>{g.items.map((it) => <Big key={it.icon} {...it} />)}</GroupBody>
              <GroupName>{g.name}</GroupName>
            </Group>
          ))}
          <Spacer />
          <Collapse type="button" aria-label="Collapse ribbon"><Svg w={12} h={8} strokeWidth="2.500"><path d="M1 7L6 1L11 7" /></Svg></Collapse>
        </Groups>
        <CalloutNumber $left={32} $top={134}>1</CalloutNumber>
        <Callout $inset="184px auto -62px 1px" $w={57} />
      </Ribbon>

      <Body>
        <Rail>
          <RailButton type="button" aria-label="Report view"><Svg w={22} stroke="#000" strokeWidth="1.800"><path d="M1 0V21H22M5 18V6H8V18ZM11 18V10H14V18ZM17 18V2H20V18Z" /></Svg></RailButton>
          <RailButton type="button" aria-label="Table view"><Svg w={24} stroke={GREY}><Box at={[1, 1, 22, 22]} f="none" s={GREY} /><path d="M1 6H23M1 12H23M1 17.500H23M8 6V23M16 6V23" /></Svg></RailButton>
          <RailButton type="button" aria-label="Model view"><Svg w={28} stroke={GREY}><path d="M16 1H27V12H16ZM16 16H27V27H16ZM1 9H12V20H1ZM16 4H27M16 19H27M1 12H12M7 9V4H16M7 20V24H16" /></Svg></RailButton>
          <RailButton type="button" aria-label="DAX query view"><Svg w={26} stroke={GREY}><path d="M6 14V4Q6 1 9 1H15L21 8V19M15 1V8H21M24 9V17Q24 22 21 24" /><Glyph x={10} y={25} size={11} weight={700} fill={GREY}>DAX</Glyph></Svg></RailButton>
        </Rail>

        <Canvas>
          <Slicer>
            <SlicerHead><label htmlFor="age">Age Breakdown</label><ChevronDown w={26} h={14} sw={1.8} /></SlicerHead>
            <SelectWrap>
              <Select id="age" defaultValue="All"><option>All</option></Select>
              <ChevronDown w={30} h={16} c="#605e5c" sw={1.8} />
            </SelectWrap>
          </Slicer>
          <VisualFrame>
            <Callout $inset="0" />
            <Visual>
              <Handle $at="left:-1px;top:-1px;" $corner="5px 0 0 5px" />
              <Handle $at="right:-1px;top:-1px;" $corner="5px 5px 0 0" />
              <Handle $at="left:-1px;bottom:-1px;" $corner="0 0 5px 5px" />
              <Handle $at="right:-1px;bottom:-1px;" $corner="0 5px 5px 0" />
              <Handle $at="left:calc(50% - 9px);top:-1px;width:19px;height:6px;" />
              <Handle $at="left:calc(50% - 9px);bottom:-1px;width:19px;height:6px;" />
              <Handle $at="top:calc(50% - 9px);left:-1px;width:6px;height:19px;" />
              <Handle $at="top:calc(50% - 9px);right:-1px;width:6px;height:19px;" />
              <VisualTools>
                <VisualTool type="button" aria-label="Filters"><Svg w={24} h={22} stroke="#605e5c"><path d="M1 1H23V3L15 11V21H10V11L1 3Z" /></Svg></VisualTool>
                <VisualTool type="button" aria-label="Focus mode"><Svg w={22} h={20} stroke="#605e5c"><path d="M10 1H1V19H21V10M1 11H11V19M14 1H21V8M21 1L12 10" /></Svg></VisualTool>
                <VisualTool type="button" aria-label="More options"><Dots w={22} c="#605e5c" r={2} /></VisualTool>
              </VisualTools>
              <Svg w={75} stroke="#000" strokeWidth="4"><circle cx="37.500" cy="37.500" r="35.500" /><path d="M23 23L52 52M52 23L23 52" /></Svg>
              <ErrorText>Something's wrong with one or more fields. <a href="#details">See details</a></ErrorText>
              <FixButton type="button">Fix this</FixButton>
            </Visual>
          </VisualFrame>
        </Canvas>

        <Pane $w={271} $plain>
          <PaneHead $left={17} $right={15}>
            <Row $gap={13}>
              <Svg w={25} h={22} strokeWidth="2"><path d="M1 1H24V3L16 12V21H10V12L1 3Z" /></Svg>
              <PaneTitle>Filters</PaneTitle>
            </Row>
            <Spacer />
            <Row $gap={26}>
              <button type="button" aria-label="Show filters"><Svg w={20} h={12}><path d="M1 7Q3 1 10 1Q17 1 19 7" /><circle cx="10" cy="7" r="3" /></Svg></button>
              <button type="button" aria-label="Collapse filters"><DoubleChevron /></button>
            </Row>
          </PaneHead>
          <FilterTop>
            <SearchBox $h={46} $gap={20} $pad={15}>
              <Svg w={24}><circle cx="15" cy="8" r="7" /><path d="M10 13L1 22" /></Svg>
              <input type="text" placeholder="Search" aria-label="Search filters" />
            </SearchBox>
          </FilterTop>
          <FilterSection title="Filters on this visual"><Card>Short_Month<br />is (All)</Card></FilterSection>
          <FilterSection title="Filters on this page" />
          <FilterSection title="Filters on all pages" />
        </Pane>

        <Pane $w={271}>
          <PaneHead $left={12} $right={12}>
            <PaneTitle>Visualizations</PaneTitle><Spacer />
            <button type="button" aria-label="Collapse visualizations"><DoubleChevron /></button>
          </PaneHead>
          <BuildTitle>Build visual</BuildTitle>
          <BuildTabs>
            <BuildTab $on type="button" aria-label="Build visual">
              <Svg w={36}><path d="M0 1H29" /><g fill={TEAL} strokeDasharray="3 2"><rect x="1" y="9" width="34" height="10" /><rect x="1" y="25" width="34" height="10" /></g></Svg>
            </BuildTab>
            <BuildTab type="button" aria-label="Format visual">
              <Svg w={34}><path d="M1 27V13H10V26M10 13V1H19V18M19 9H29" /><path d="M14 22Q22 12 33 11Q30 22 20 28Q18 22 14 22Z" fill="#f3f2f1" stroke="none" /><path d="M33 11L19 23Q21 25 22 26ZM19 24Q14 23 12 28Q10 32 6 32Q16 36 21 31Q23 28 22 26" /></Svg>
            </BuildTab>
            <BuildTab type="button" aria-label="Analytics">
              <Svg w={36}><circle cx="15" cy="15" r="14" strokeWidth="2" /><path d="M2 16L8 12L14 16L27 7M8 18V26M13 20V28M18 18V28M23 15V24" strokeWidth="2" /><path d="M25 25L35 34" strokeWidth="4" /></Svg>
            </BuildTab>
          </BuildTabs>
          <Svg w={270} h={12} stroke="#8a8886"><path d="M0 11H25L36 0L48 11H270" /></Svg>
          <Gallery>
            {gallery.map(([name, art], i) => (
              <GalleryButton key={name} type="button" aria-label={name} $on={i === 6}><Svg>{art}</Svg></GalleryButton>
            ))}
          </Gallery>
          <WellName>X-axis</WellName>
          <Well><FieldChip name="Short_Month" /></Well>
          <WellName>Y-axis</WellName>
          <Well>
            <Callout $inset="-22px -34px -15px -14px" />
            <CalloutNumber $left={-62} $top={-7}>2</CalloutNumber>
            {yFields.map((f) => <FieldChip key={f} name={f} warn />)}
          </Well>
          <WellName>Secondary y-axis</WellName>
          <EmptyWell>Add data fields here</EmptyWell>
        </Pane>

        <Pane $w={270}>
          <PaneHead $left={13} $right={11}>
            <PaneTitle>Data</PaneTitle><Spacer />
            <button type="button" aria-label="Collapse data"><DoubleChevron /></button>
          </PaneHead>
          <SearchBox $soft $h={37} $gap={10} $pad={18}>
            <Svg w={22} stroke="#605e5c"><circle cx="9" cy="9" r="8" /><path d="M15 15L21 21" /></Svg>
            <input type="text" placeholder="Search" aria-label="Search data" />
          </SearchBox>
          <Tree>
            <TreeRow $root>
              <RootButton type="button">
                <ChevronDown w={18} h={10} />
                <Svg w={24} h={20}><rect x="1" y="1" width="17" height="17" rx="3" strokeWidth="2" /><path d="M1 6H18M1 12H18M7 1V18M13 1V18" /><circle cx="18" cy="19" r="9" fill={TEAL} stroke="none" /><path d="M14 19L17 22L22 17" stroke="#fff" strokeWidth="2" /></Svg>
                hospital_activity_data
              </RootButton>
            </TreeRow>
            {fields.map((f) => (
              <TreeRow key={f.name}>
                {f.marked && <><Callout $inset="-2px 26px -6px 36px" /><CalloutNumber $left={4} $top={-15}>3</CalloutNumber></>}
                <CheckLabel>
                  <CheckCell>
                    <CheckInput type="checkbox" defaultChecked={f.on} />
                    <Svg w={12} h={9} stroke="#fff" strokeWidth="1.800"><path d="M1 4L4.500 8L11 1" /></Svg>
                  </CheckCell>
                  <FieldIcon>{fieldIcons[f.icon]}</FieldIcon>
                  {f.name}
                </CheckLabel>
              </TreeRow>
            ))}
          </Tree>
        </Pane>
      </Body>
    </Page>
  );
}
